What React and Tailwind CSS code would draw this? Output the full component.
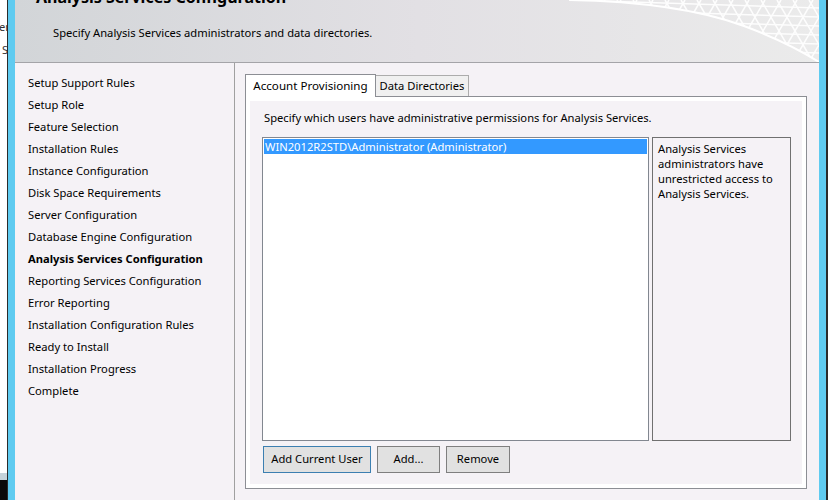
const steps = [
  'Setup Support Rules',
  'Setup Role',
  'Feature Selection',
  'Installation Rules',
  'Instance Configuration',
  'Disk Space Requirements',
  'Server Configuration',
  'Database Engine Configuration',
  'Analysis Services Configuration',
  'Reporting Services Configuration',
  'Error Reporting',
  'Installation Configuration Rules',
  'Ready to Install',
  'Installation Progress',
  'Complete',
];

const current = 'Analysis Services Configuration';

// white lattice in the banner corner
const Mesh = () => {
  const lines = [];
  for (let i = -12; i < 24; i++) {
    const x = i * 16;
    lines.push(<line key={'a' + i} x1={x} y1={0} x2={x + 36} y2={62} />);
    lines.push(<line key={'b' + i} x1={x + 36} y1={0} x2={x} y2={62} />);
  }
  for (let j = 0; j < 8; j++) {
    const y = j * 9;
    lines.push(<line key={'h' + j} x1={0} y1={y} x2={250} y2={y + 8} />);
  }
  return (
    <svg className="absolute top-0 right-0" width="250" height="62" viewBox="0 0 250 62">
      <defs>
        <clipPath id="meshclip">
          <path d="M0 0 Q110 2 175 26 Q218 42 250 62 L250 0 Z" />
        </clipPath>
      </defs>
      <g clipPath="url(#meshclip)" stroke="#ffffff" strokeWidth="1.6" opacity="0.9">
        {lines}
      </g>
      <path d="M0 0 Q110 2 175 26 Q218 42 250 62" fill="none" stroke="#ffffff" strokeWidth="2" />
    </svg>
  );
};

const Button = ({ children, width, focused }) => (
  <button
    className={`h-[27px] ${width} bg-[#e1e1e1] border ${focused ? 'border-[#3c7fb1]' : 'border-[#7f7f7f]'} text-[11.2px] text-black`}
  >
    {children}
  </button>
);

export default function App() {
  return (
    <div className="w-[828px] h-[500px] flex overflow-hidden font-['Segoe_UI','Noto_Sans',sans-serif] text-[11.2px] text-black">
      {/* window behind */}
      <div className="w-[7px] flex flex-col bg-white overflow-hidden">
        <div className="flex-1 pt-[15px] leading-[23px] whitespace-nowrap text-[#333]">
          <div className="ml-[-1px]">er</div>
          <div className="ml-[2px]">S</div>
        </div>
        <div className="h-[7px] bg-[#c5d3da]" />
        <div className="h-[20px] bg-[#0a0a0a]" />
      </div>
      <div className="w-px bg-[#2b2b2b]" />
      <div className="w-[7px] bg-[#5fcbf0]" />

      {/* dialog */}
      <div className="w-[804px] flex flex-col bg-[#f5f2f6]">
        {/* Banner */}
        <div className="relative h-[63px] overflow-hidden border-b border-[#a4a4a8] bg-gradient-to-r from-[#d2d5d8] via-[#e2e0e4] to-[#ebebeb]">
          <Mesh />
          <div className="relative pl-[21px] mt-[-14px] text-[16px] font-bold leading-[22px]">
            Analysis Services Configuration
          </div>
          <div className="relative pl-[38px] mt-[17px] leading-[16px]">
            Specify Analysis Services administrators and data directories.
          </div>
        </div>

        <div className="flex flex-1">
          {/* Steps */}
          <div className="w-[221px] border-r border-[#a0a0a0] pt-[9px] pl-[13px]">
            {steps.map((s) => (
              <div key={s} className={`h-[22px] flex items-center ${s === current ? 'font-bold' : ''}`}>
                {s}
              </div>
            ))}
          </div>

          {/* Page */}
          <div className="flex-1 flex flex-col pl-[10px] pr-[12px] pt-[11px]">
            <div className="h-[22px] flex items-end">
              <div className="relative z-10 mb-[-1px] w-[131px] h-[23px] border border-b-0 border-[#8c8e94] bg-white flex items-center justify-center text-[11.6px]">
                Account Provisioning
              </div>
              <div className="w-[93px] h-[21px] border border-b-0 border-l-0 border-[#acacac] bg-[#f0f0f0] flex items-center justify-center">
                Data Directories
              </div>
            </div>

            <div className="h-[393px] border border-[#8c8e94] bg-white p-[4px]">
              <div className="h-full bg-[#f5f2f6] pl-[12px] pr-[11px] pt-[9px]">
                <div className="h-[16px] leading-[16px] pl-[2px]">
                  Specify which users have administrative permissions for Analysis Services.
                </div>

                <div className="mt-[11px] h-[304px] flex gap-[3px]">
                  <div className="w-[387px] border border-[#828790] bg-white p-px">
                    <div className="h-[15px] leading-[15px] bg-[#3399ff] text-white pl-[1px]">
                      WIN2012R2STD\Administrator (Administrator)
                    </div>
                  </div>
                  <div className="w-[139px] border border-[#707070] pl-[5px] pt-[3px] leading-[15px]">
                    Analysis Services
                    <br />
                    administrators have
                    <br />
                    unrestricted access to
                    <br />
                    Analysis Services.
                  </div>
                </div>

                <div className="mt-[5px] flex gap-[6px] pl-px">
                  <Button width="w-[108px]" focused>
                    Add Current User
                  </Button>
                  <Button width="w-[63px]">Add...</Button>
                  <Button width="w-[64px]">Remove</Button>
                </div>
              </div>
            </div>
          </div>
        </div>
      </div>

      <div className="w-[7px] bg-[#5fcbf0]" />
      <div className="w-[2px] bg-[#2b2b2b]" />
    </div>
  );
}
